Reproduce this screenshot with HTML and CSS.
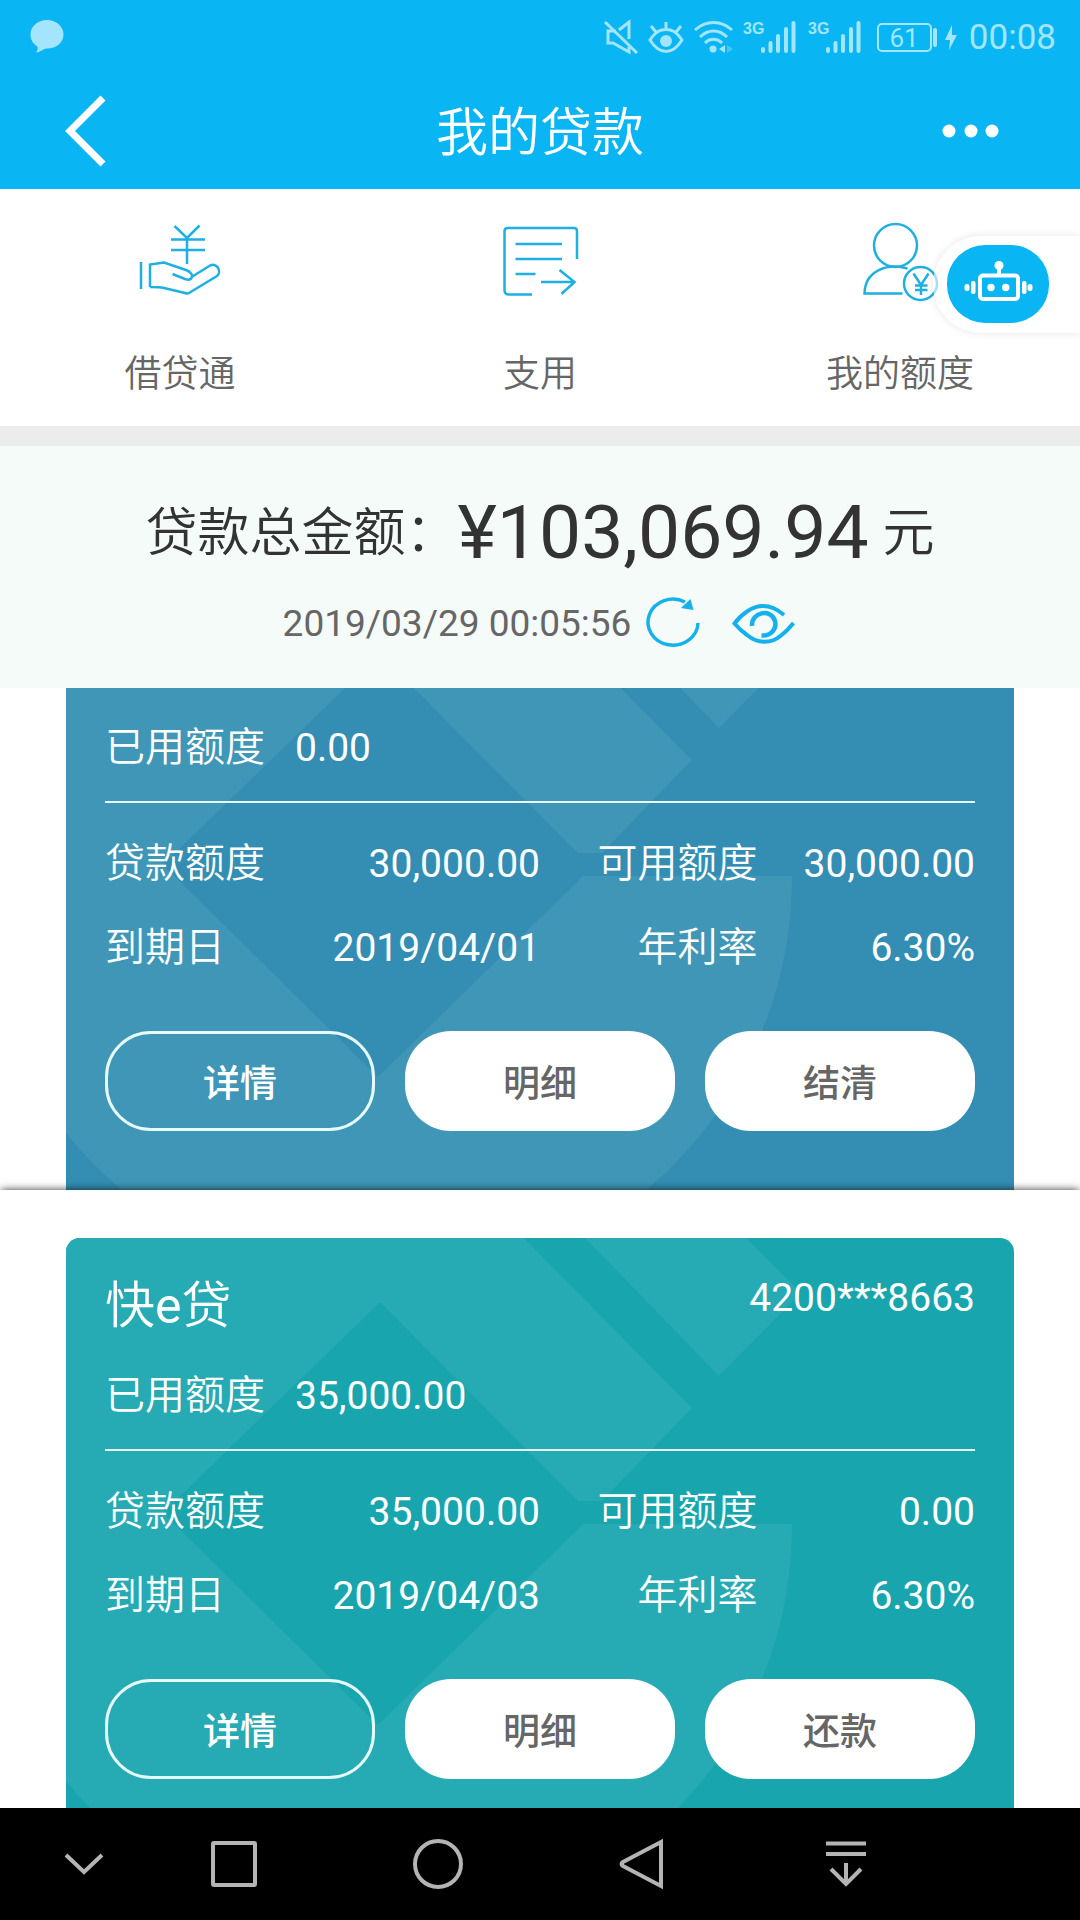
FILE: index.html
```html
<!DOCTYPE html>
<html lang="zh-CN">
<head>
<meta charset="utf-8">
<meta name="viewport" content="width=device-width, initial-scale=1">
<title>我的贷款</title>
<link rel="stylesheet" href="styles.css">
</head>
<body>
<div class="page">
  <header class="header">
    <div class="status">
      <svg class="status-chat" width="34" height="34" viewBox="0 0 34 34" aria-hidden="true"><path d="M17 0C26.500 0 33.500 6.500 33.500 14.500S26.500 28.500 17 28.500C12.500 29 10 32.500 6 32.500C7.500 30.500 8 28.500 7.500 26.500C3 24 .5 19.500 .5 14.500C.5 6.500 7.500 0 17 0Z" fill="currentColor"/></svg>
      <div class="status-icons">
        <svg width="34" height="36" viewBox="0 0 34 36" fill="none" stroke="currentColor" stroke-width="3" aria-hidden="true"><path d="M1 3L33 34M12 12H4V24H9L25 33V28M15 11L25 3V20"/></svg>
        <svg width="36" height="36" viewBox="0 0 36 36" fill="none" stroke="currentColor" stroke-width="3" aria-hidden="true"><path d="M2 21C8 12.500 12 10.500 18 10.500S28 12.500 34 21C29 29 24 32.500 18 32.500S7 29 2 21ZM18 10V3M8 13L3 7M28 13L33 7"/><circle cx="18" cy="22" r="6" fill="currentColor" stroke="none"/></svg>
        <svg width="39" height="36" viewBox="0 0 39 36" fill="none" stroke="currentColor" stroke-width="3" aria-hidden="true"><path d="M1 11C12 1 27 1 38 11M6 18C14 10 25 10 33 18M11 24C16 19 23 19 28 24"/><circle cx="19" cy="30" r="3.500" fill="currentColor" stroke="none"/><path d="M31 26V34L25 30Z" fill="currentColor" stroke="none"/><path d="M33 26V34L39 30Z" fill="currentColor" stroke="none" opacity=".4"/></svg>
        <svg width="55" height="36" viewBox="0 0 55 36" fill="none" stroke="currentColor" stroke-width="4" stroke-linecap="round" role="img" aria-label="3G"><text class="net" x="0" y="15">3G</text><path d="M20 30V32M27.500 24V32M35 17V32M43 10V32M50.500 4V32"/></svg>
        <svg width="55" height="36" viewBox="0 0 55 36" fill="none" stroke="currentColor" stroke-width="4" stroke-linecap="round" role="img" aria-label="3G"><text class="net" x="0" y="15">3G</text><path d="M20 30V32M27.500 24V32M35 17V32M43 10V32M50.500 4V32"/></svg>
        <svg width="86" height="36" viewBox="0 0 86 36" fill="none" stroke="currentColor" stroke-width="2" role="img" aria-label="61"><rect x="5" y="5" width="53" height="27" rx="4"/><path d="M62 11V26" stroke-width="4" stroke-linecap="round"/><text class="battery" x="31" y="28" text-anchor="middle">61</text><path d="M79 6L72 21H77L76 31L84 16H79Z" fill="currentColor" stroke="none"/></svg>
        <time class="clock">00:08</time>
      </div>
    </div>
    <div class="titlebar">
      <button class="icon-button" type="button" aria-label="返回"><svg width="44" height="74" viewBox="0 0 44 74" fill="none" stroke="#fff" stroke-width="7"><path d="M41 4L8 37L41 70"/></svg></button>
      <h1 class="title">我的贷款</h1>
      <button class="icon-button more" type="button" aria-label="更多"><svg width="58" height="14" viewBox="0 0 58 14" fill="#fff"><circle cx="7" cy="7" r="6.500"/><circle cx="29" cy="7" r="6.500"/><circle cx="50" cy="7" r="6.500"/></svg></button>
    </div>
  </header>

  <nav class="actions">
    <a class="action" href="#loan">
      <svg width="84" height="76" viewBox="0 0 84 76"><path d="M3 40V67M12 65V42.500L26 40.500L48 48C53 50 55 53 53.500 56C52 58.500 50 58 47 57L34.500 52M54.500 54.500L72 43.500C79 40 84 50 79 54L51 71Q49.500 72 47 71L26 66Q22 65 12 65M36.500 4L49 16L61.500 3.500M49 16V42M33 17.500H67M33 28H67"/></svg>
      <span>借贷通</span>
    </a>
    <a class="action" href="#draw">
      <svg width="84" height="76" viewBox="0 0 84 76"><path d="M79 37V9Q79 6 76 6H10Q6.500 6 6.500 9V68Q6.500 72.500 11 72.500H34M17.500 22H64M17.500 37H64M17.500 52H37.500M43 60H76.500M61.500 48L76.500 60L63.500 72"/></svg>
      <span>支用</span>
    </a>
    <a class="action" href="#limit">
      <svg width="84" height="76" viewBox="0 0 84 76"><circle cx="37.500" cy="23.500" r="21.500"/><path d="M49.500 46.500C30 41 7 48 6.500 71.500H44.500"/><circle cx="62.500" cy="61.500" r="16.500"/><path d="M55.500 51.500L63 63L70.500 51.500M63 63V73M57 63.500H69.500M57 68H69.500"/></svg>
      <span>我的额度</span>
    </a>
    <div class="assistant">
      <button class="assistant-button" type="button" aria-label="智能客服"><svg width="102" height="78" viewBox="0 0 102 78" fill="#fff"><rect x="33" y="30.500" width="38" height="23.500" rx="3" fill="none" stroke="#fff" stroke-width="4"/><circle cx="44" cy="42.500" r="3.700"/><circle cx="58.700" cy="42.500" r="3.700"/><circle cx="52" cy="20.500" r="4.500"/><rect x="50" y="22" width="4" height="8"/><rect x="24" y="36" width="4.500" height="13" rx="2"/><rect x="17.500" y="39" width="5" height="7" rx="2.500"/><rect x="75" y="36" width="4.500" height="13" rx="2"/><rect x="80.500" y="39" width="5" height="7" rx="2.500"/></svg></button>
    </div>
  </nav>

  <section class="summary">
    <p class="total"><span class="caption">贷款总金额：</span><strong class="amount">¥103,069.94</strong><span class="caption unit">元</span></p>
    <div class="updated">
      <time>2019/03/29 00:05:56</time>
      <button class="icon-button refresh" type="button" aria-label="刷新"><svg width="54" height="50" viewBox="0 0 54 50" fill="none" stroke="#14b1ec" stroke-width="3.500"><path d="M51 25A25 23 0 1 1 38 4"/><path d="M34 10L43.500 1L46.500 12Z" fill="#14b1ec" stroke="none"/></svg></button>
      <button class="icon-button eye" type="button" aria-label="隐藏金额"><svg width="66" height="50" viewBox="0 0 66 50" fill="none" stroke="#14b1ec" stroke-width="4"><path d="M53 17C40 6 27 6 16 13.500Q9 18 3.500 25.500Q9 32 16 37C27 46 40 46 50 37.500Q56 33 62.500 25"/><path d="M21 28C20 14 40 10 44 23C46 31 40 38 30.500 37.500" stroke-width="4.500"/></svg></button>
    </div>
  </section>

  <main class="loans">
    <section class="panel">
      <article class="card card-blue card-scrolled">
        <svg class="pattern" viewBox="0 0 948 600" preserveAspectRatio="xMinYMin slice" aria-hidden="true"><path d="M0 0H458L626 170L536 263H512L314 64L97 275L312 487L517 286H726A408 408 0 0 1 0 543ZM519 0L653 138L735 55L680 0Z"/></svg>
        <p class="used"><span class="label">已用额度</span><span class="value">0.00</span></p>
        <dl class="facts">
          <dt>贷款额度</dt><dd>30,000.00</dd><dt>可用额度</dt><dd>30,000.00</dd>
          <dt>到期日</dt><dd>2019/04/01</dd><dt>年利率</dt><dd>6.30%</dd>
        </dl>
        <div class="buttons">
          <button class="button button-outline" type="button">详情</button>
          <button class="button" type="button">明细</button>
          <button class="button" type="button">结清</button>
        </div>
      </article>
    </section>
    <section class="panel panel-raised">
      <article class="card card-teal">
        <svg class="pattern" viewBox="0 0 948 600" preserveAspectRatio="xMinYMin slice" aria-hidden="true"><path d="M0 0H458L626 170L536 263H512L314 64L97 275L312 487L517 286H726A408 408 0 0 1 0 543ZM519 0L653 138L735 55L680 0Z"/></svg>
        <header class="card-head"><h2 class="card-name">快<span class="latin">e</span>贷</h2><span class="card-number">4200***8663</span></header>
        <p class="used"><span class="label">已用额度</span><span class="value">35,000.00</span></p>
        <dl class="facts">
          <dt>贷款额度</dt><dd>35,000.00</dd><dt>可用额度</dt><dd>0.00</dd>
          <dt>到期日</dt><dd>2019/04/03</dd><dt>年利率</dt><dd>6.30%</dd>
        </dl>
        <div class="buttons">
          <button class="button button-outline" type="button">详情</button>
          <button class="button" type="button">明细</button>
          <button class="button" type="button">还款</button>
        </div>
      </article>
    </section>
  </main>

  <nav class="system">
    <button class="icon-button system-hide" type="button" aria-label="收起"><svg width="40" height="52" viewBox="0 0 40 52"><path d="M2 17L20 34L38 17"/></svg></button>
    <button class="icon-button" type="button" aria-label="最近任务"><svg width="52" height="52" viewBox="0 0 52 52"><rect x="5" y="5" width="42" height="42" rx="1"/></svg></button>
    <button class="icon-button" type="button" aria-label="主屏幕"><svg width="52" height="52" viewBox="0 0 52 52"><circle cx="26" cy="26" r="23"/></svg></button>
    <button class="icon-button" type="button" aria-label="后退"><svg width="52" height="52" viewBox="0 0 52 52"><path d="M45 4V48L7 28Q4 26 7 24Z"/></svg></button>
    <button class="icon-button" type="button" aria-label="通知"><svg width="52" height="52" viewBox="0 0 52 52"><path d="M6 5.500H46M6 16H46M26 25V46M11 31L26 46L41 31"/></svg></button>
  </nav>
</div>
</body>
</html>
```
FILE: styles.css
```css
* {
  box-sizing: border-box;
}

body {
  margin: 0;
  background: #fff;
  color: #666;
  font-family: Roboto, "Noto Sans CJK SC", sans-serif;
  font-size: 37px;
}

h1,
h2,
p,
dl,
dd {
  margin: 0;
  font-weight: 400;
}

button {
  padding: 0;
  border: 0;
  background: none;
  color: inherit;
  font: inherit;
}

svg {
  display: block;
  flex: none;
  overflow: visible;
}

.page {
  display: flex;
  flex-direction: column;
  min-height: 100vh;
}

.icon-button {
  display: flex;
  align-items: center;
  justify-content: center;
}

/* Header */

.header {
  background: #0ab5f3;
  color: #fff;
}

.status {
  display: flex;
  align-items: center;
  justify-content: space-between;
  height: 72px;
  padding: 2px 24px 0 30px;
  color: #a2e5fc;
}

.status-icons {
  display: flex;
  align-items: center;
  gap: 10px;
}

.net {
  fill: currentColor;
  stroke: none;
  font: 700 16px "Liberation Sans Narrow", "Liberation Sans", sans-serif;
}

.battery {
  fill: currentColor;
  stroke: none;
  font-size: 26px;
  font-weight: 400;
}

.clock {
  padding-top: 2px;
  font-size: 35px;
  line-height: 40px;
}

.titlebar {
  display: grid;
  grid-template-columns: 1fr auto 1fr;
  align-items: center;
  height: 117px;
  padding: 0 62px;
}

.titlebar .icon-button {
  justify-self: start;
}

.titlebar .more {
  justify-self: end;
  margin-right: 18px;
}

.title {
  padding-top: 6px;
  font-size: 52px;
  font-weight: 350;
  line-height: 76px;
}

/* Shortcuts */

.actions {
  position: relative;
  display: grid;
  grid-template-columns: repeat(3, 1fr);
  border-bottom: 20px solid #ececec;
}

.action {
  display: flex;
  flex-direction: column;
  align-items: center;
  gap: 51px;
  padding: 33px 0 25px;
  color: #666;
  font-weight: 350;
  line-height: 52px;
  text-decoration: none;
}

.action svg {
  fill: none;
  stroke: #1eb0e2;
  stroke-width: 2.5;
}

.assistant {
  position: absolute;
  top: 47px;
  right: 0;
  padding: 9px 31px 10px 14px;
  border-radius: 49px 0 0 49px;
  background: rgba(255, 255, 255, .6);
  box-shadow: 0 0 8px rgba(0, 0, 0, .1);
}

.assistant-button {
  display: block;
  border-radius: 38px;
  background: #0ab5f3;
}

/* Total */

.summary {
  padding: 36px 0 40px;
  background: #f5fbf9;
}

.total {
  display: flex;
  align-items: center;
  justify-content: center;
  height: 100px;
  color: #333;
  font-size: 52px;
}

.caption {
  padding-bottom: 8px;
  font-weight: 350;
}

.amount {
  font-size: 75px;
  font-weight: 400;
}

.unit {
  margin-left: 14px;
}

.updated {
  display: flex;
  align-items: center;
  justify-content: center;
  height: 50px;
  margin-top: 16px;
}

.refresh {
  margin-left: 16px;
}

.eye {
  margin-left: 30px;
}

/* Loan cards */

.loans {
  flex: 1;
}

.panel {
  padding: 0 66px;
}

.panel-raised {
  position: relative;
  padding-top: 48px;
  background: #fff;
  box-shadow: 0 -1px 8px -1px rgba(0, 0, 0, .8);
}

.card {
  position: relative;
  z-index: 0;
  overflow: hidden;
  padding: 0 39px 29px;
  border-radius: 14px 14px 0 0;
  color: #fff;
  font-size: 40px;
}

.card-scrolled {
  padding: 18px 39px 59px;
  border-radius: 0;
}

.card-blue {
  background: #348db3;
}

.card-teal {
  background: #18a5ad;
}

.pattern {
  position: absolute;
  z-index: -1;
  top: 0;
  left: 0;
  width: 100%;
  height: 600px;
}

.card-scrolled .pattern {
  top: auto;
  bottom: 0;
}

.card-blue .pattern {
  fill: #4096b6;
}

.card-teal .pattern {
  fill: #26aab3;
}

.card-head {
  display: flex;
  align-items: flex-start;
  justify-content: space-between;
  padding: 30px 0 10px;
}

.card-name {
  font-size: 50px;
  line-height: 76px;
}

.card-number {
  line-height: 60px;
}

.card-number,
.value,
.facts dd {
  font-size: 39px;
}

.used {
  display: flex;
  gap: 30px;
  padding-bottom: 11px;
  border-bottom: 2px solid #e6fbff;
  line-height: 84px;
}

.label,
.facts dt,
.card-name {
  font-weight: 350;
}

.latin {
  font-weight: 400;
}

.facts {
  display: grid;
  grid-template-columns: repeat(4, 1fr);
  padding: 19px 0 41px;
  line-height: 84px;
  text-align: right;
}

.facts dt:nth-of-type(odd) {
  text-align: left;
}

.buttons {
  display: grid;
  grid-template-columns: repeat(3, 1fr);
  gap: 30px;
}

.button {
  height: 100px;
  border-radius: 46px;
  background: #fff;
  color: #666;
  font-size: 37px;
  font-weight: 500;
}

.button-outline {
  border: 3px solid #e6fbff;
  background: none;
  color: #fff;
}

/* System navigation */

.system {
  display: grid;
  grid-template-columns: 132fr repeat(4, 204fr) 132fr;
  height: 112px;
  background: #000;
}

.system svg {
  fill: none;
  stroke: #b4b4b4;
  stroke-width: 4;
}

.system-hide {
  padding-left: 36px;
}
```
